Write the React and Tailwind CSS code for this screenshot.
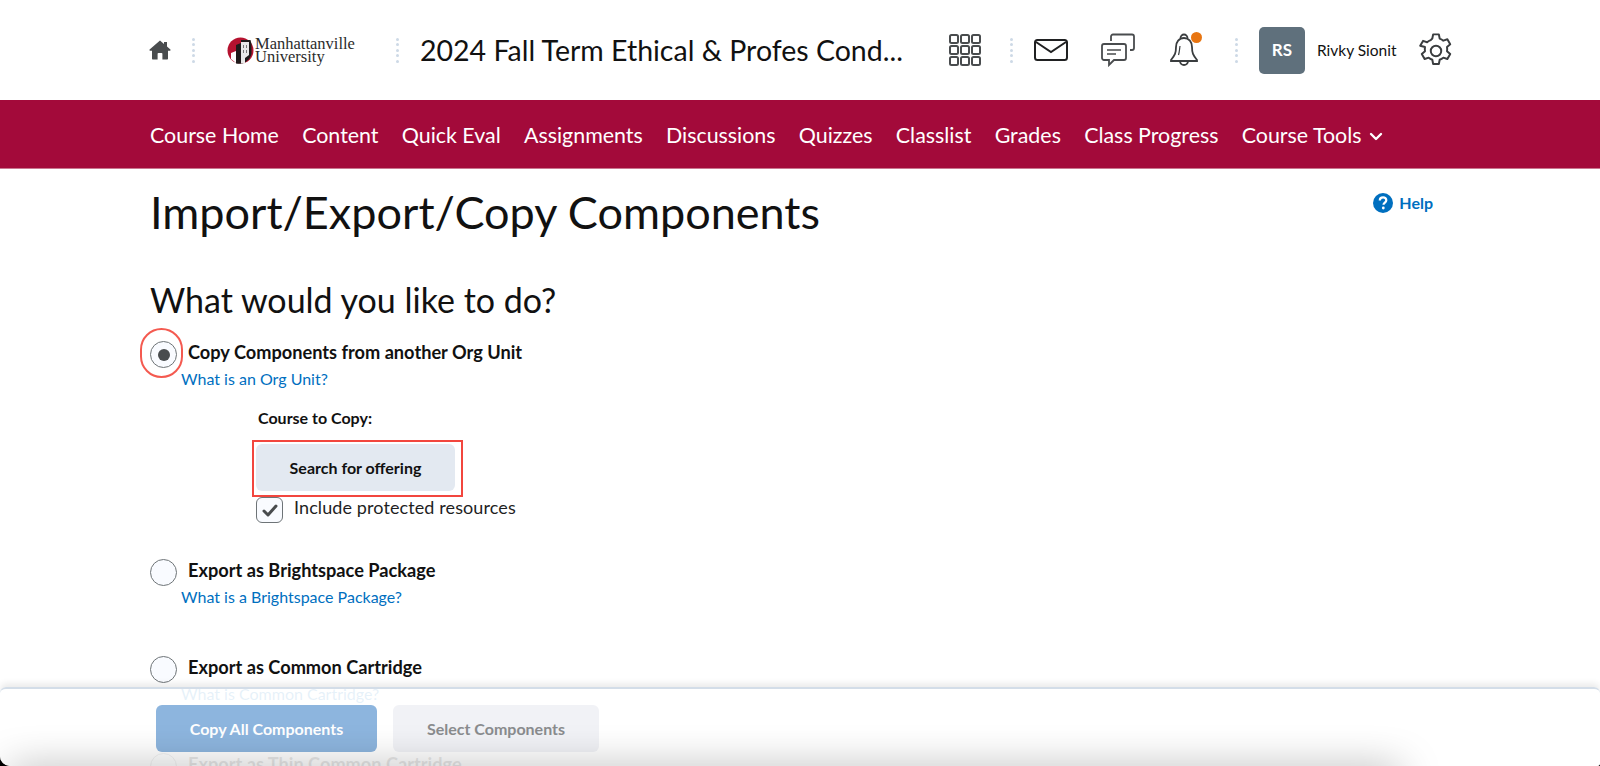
const navItems = [
  "Course Home",
  "Content",
  "Quick Eval",
  "Assignments",
  "Discussions",
  "Quizzes",
  "Classlist",
  "Grades",
  "Class Progress",
];

function Dots({ className }) {
  return (
    <div className={"flex flex-col gap-[2.500px] " + className}>
      {[0, 1, 2, 3, 4].map((i) => (
        <span key={i} className="w-[3px] h-[3px] rounded-full bg-[#cdd9e6]" />
      ))}
    </div>
  );
}

function Logo() {
  return (
    <div className="flex items-center w-[130px] h-[30px]">
      <svg width="27" height="27" viewBox="0 0 27 27" className="shrink-0">
        <circle cx="13.5" cy="13.5" r="13" fill="#b5122f" />
        <path d="M9 26.5V8l5-2V3h9.5l1 4v10a13 13 0 0 1-15.500 9.500z" fill="#1f1a1a" />
        <path d="M14 26.600V5h8v13l-4 3v5.600z" fill="#e8e8e8" />
        <path d="M4 22v-6l5-2v12z" fill="#fff" />
        <path d="M16 8h1v3h-1zM19 8h1v3h-1zM16 13h1v3h-1zM19 13h1v3h-1z" fill="#777" />
      </svg>
      <div className="ml-[1px] text-[16.500px] leading-[13px] text-[#2b2b2b] font-['Liberation_Serif',serif]">
        <div>Manhattanville</div>
        <div>University</div>
      </div>
    </div>
  );
}

function Radio({ checked }) {
  return (
    <span className="flex items-center justify-center w-[27px] h-[27px] rounded-full border border-[#6e7477] bg-[#f9fbff] shrink-0">
      {checked && <span className="w-[12px] h-[12px] rounded-full bg-[#494c4e]" />}
    </span>
  );
}

function Option({ label, link, checked }) {
  return (
    <div>
      <div className="flex items-center gap-[11px] h-[27px]">
        <Radio checked={checked} />
        <span className="mb-[3px] text-[18.200px] font-bold text-[#111]">{label}</span>
      </div>
      <a className="block ml-[31px] mt-[1px] text-[16px] leading-[20px] text-[#006fbf]">{link}</a>
    </div>
  );
}

export default function App() {
  return (
    <div className="h-[766px] w-[1600px] bg-black">
      <div className="relative h-[766px] w-[1600px] overflow-hidden rounded-bl-[10px] rounded-br-[3px] bg-white font-['Lato',sans-serif] text-[#111]">
        <header className="flex items-center h-[100px] pl-[149px]">
          <svg width="22" height="20" viewBox="0 0 22 20" className="text-[#494c4e] mt-[-1px]">
            <path
              fill="currentColor"
              d="M11 .5 .6 9.600c-.5.5-.2 1.200.5 1.200H3v7.600c0 .6.4 1 1 1h4.600v-5.600c0-.5.3-.8.8-.8h3.200c.5 0 .8.3.8.8v5.600H18c.6 0 1-.4 1-1v-7.600h1.900c.7 0 1-.7.5-1.200L18 6.600V2h-3v2L11 .5z"
            />
          </svg>
          <Dots className="ml-[21px]" />
          <div className="ml-[32px]">
            <Logo />
          </div>
          <Dots className="ml-[39px]" />
          <h1 className="ml-[21px] text-[28.500px] leading-[34px] w-[493px] whitespace-nowrap text-[#111]">
            2024 Fall Term Ethical &amp; Profes Cond...
          </h1>
          <svg width="32" height="32" viewBox="0 0 32 32" className="ml-[36px] text-[#494c4e]" fill="none" stroke="currentColor" strokeWidth="2">
            {[1, 12, 23].map((y) =>
              [1, 12, 23].map((x) => <rect key={x + "-" + y} x={x} y={y} width="8" height="8" rx="1.500" />)
            )}
          </svg>
          <Dots className="ml-[29px]" />
          <svg width="34" height="22" viewBox="0 0 34 22" className="ml-[21px] text-[#202122]" fill="none" stroke="currentColor" strokeWidth="2">
            <rect x="1" y="1" width="32" height="20" rx="2.500" />
            <path d="M2 3l15 10L32 3" />
          </svg>
          <svg width="34" height="34" viewBox="0 0 34 34" className="ml-[33px] text-[#494c4e]" fill="none" stroke="currentColor" strokeWidth="1.800">
            <path d="M10 8V3.500A2 2 0 0 1 12 1.500h19a2 2 0 0 1 2 2V15a2 2 0 0 1-2 2h-2" />
            <path d="M3 11h20a2 2 0 0 1 2 2v12a2 2 0 0 1-2 2H13l-5 5v-5H3a2 2 0 0 1-2-2V13a2 2 0 0 1 2-2z" />
            <path d="M6 17h14M6 21h9" strokeWidth="1.400" />
          </svg>
          <div className="relative ml-[35px] w-[34px] h-[34px]">
            <svg width="28" height="34" viewBox="0 0 28 34" className="absolute left-0 top-0 text-[#3a3d3f]" fill="none" stroke="currentColor" strokeWidth="1.800">
              <path d="M10.500 5a3.500 3.500 0 0 1 7 0" />
              <path d="M14 5c-5 0-8 4-8 9 0 6-1 8-5 13v1h26v-1c-4-5-5-7-5-13 0-5-3-9-8-9z" />
              <path d="M10 28a4 4 0 0 0 8 0" />
              <path d="M10 13c-.5 3-.5 6-1.500 9" strokeWidth="1.200" />
            </svg>
            <span className="absolute left-[21px] top-[-1px] w-[11px] h-[11px] rounded-full bg-[#e87511]" />
          </div>
          <Dots className="ml-[31px]" />
          <div className="ml-[21px] flex items-center justify-center w-[46px] h-[47px] rounded-[5px] bg-[#5f707c] text-white text-[17px] font-bold">
            RS
          </div>
          <span className="ml-[12px] mt-[1px] text-[15.500px] w-[100px] whitespace-nowrap">Rivky Sionit</span>
          <svg width="38" height="38" viewBox="0 0 24 24" className="mt-[2px] text-[#3a3d3f]" fill="none" stroke="currentColor" strokeWidth="1.250" strokeLinejoin="round">
            <path d="M9.670 4.140 10.200 1.500h3.600l.53 2.640a8 8 0 0 1 2.300 1.330l2.550-.86 1.800 3.120-2.020 1.780a8 8 0 0 1 0 2.660l2.020 1.780-1.800 3.120-2.550-.86a8 8 0 0 1-2.300 1.330l-.53 2.640h-3.600l-.53-2.640a8 8 0 0 1-2.300-1.330l-2.550.86-1.800-3.120 2.020-1.780a8 8 0 0 1 0-2.660L2.020 8.730l1.800-3.120 2.550.86a8 8 0 0 1 2.300-1.330z" />
            <circle cx="12" cy="12" r="3.300" />
          </svg>
        </header>

        <nav className="flex items-center h-[69px] pl-[150px] pt-[3px] gap-[23.250px] bg-[#a30a3a] border-b border-[#c9778f] text-white text-[21.400px]">
          {navItems.map((item) => (
            <a key={item} className="whitespace-nowrap">
              {item}
            </a>
          ))}
          <a className="flex items-center whitespace-nowrap">
            Course Tools
            <svg width="14" height="9" viewBox="0 0 14 9" className="ml-[7px] mt-[2px]" fill="none" stroke="currentColor" strokeWidth="2.400" strokeLinecap="round" strokeLinejoin="round">
              <path d="M2 2l5 5 5-5" />
            </svg>
          </a>
        </nav>

        <main className="pl-[150px] pr-[167px]">
          <div className="flex items-start justify-between pt-[14px]">
            <h2 className="text-[45px] leading-[58px]">Import/Export/Copy Components</h2>
            <a className="flex items-center gap-[6px] mt-[8px] text-[16px] font-bold text-[#006fbf]">
              <svg width="20" height="20" viewBox="0 0 20 20">
                <circle cx="10" cy="10" r="10" fill="currentColor" />
                <path d="M6.800 7.500c0-1.900 1.400-3.100 3.300-3.100s3.200 1.100 3.200 2.800c0 2.300-2.800 2.500-2.800 4.600" fill="none" stroke="#fff" strokeWidth="2.200" />
                <circle cx="10.300" cy="15" r="1.400" fill="#fff" />
              </svg>
              Help
            </a>
          </div>

          <h3 className="mt-[38px] text-[34px] leading-[42px]">What would you like to do?</h3>

          <div className="mt-[20px]">
            <Option label="Copy Components from another Org Unit" link="What is an Org Unit?" checked />

            <div className="ml-[106px] mt-[19px]">
              <div className="ml-[2px] text-[16px] font-bold leading-[20px]">Course to Copy:</div>
              <button className="mt-[16px] block w-[199px] h-[47px] rounded-[6px] bg-[#e3e9f1] text-[16px] font-bold text-[#111]">
                Search for offering
              </button>
              <label className="flex items-center gap-[11px] mt-[6px]">
                <span className="flex items-center justify-center w-[27px] h-[26px] rounded-[6px] border border-[#6e7477] bg-[#f9fbff]">
                  <svg width="16" height="13" viewBox="0 0 16 13" fill="none" stroke="#494c4e" strokeWidth="3" strokeLinecap="round" strokeLinejoin="round">
                    <path d="M2 7l4 4 8-9" />
                  </svg>
                </span>
                <span className="mb-[7px] text-[18px] leading-[16px] tracking-[0.1px] text-[#1f1f1f]">Include protected resources</span>
              </label>
            </div>

            <div className="mt-[36px]">
              <Option label="Export as Brightspace Package" link="What is a Brightspace Package?" />
            </div>
            <div className="mt-[49px]">
              <Option label="Export as Common Cartridge" link="What is Common Cartridge?" />
            </div>
            <div className="mt-[49px]">
              <Option label="Export as Thin Common Cartridge" link="What is Thin Common Cartridge?" />
            </div>
          </div>
        </main>

        {/* floating action bar over the list */}
        <div className="absolute left-0 right-0 bottom-0 h-[79px] rounded-tl-[6px] rounded-tr-[6px] border-t-2 border-[#d3dde8] bg-white/90 shadow-[0_-4px_6px_rgba(0,0,0,0.08)]">
          <div className="flex gap-[16px] pl-[156px] pt-[16px]">
            <button className="w-[221px] h-[47px] rounded-[6px] bg-[#8db5de] text-[16px] font-bold text-white">
              Copy All Components
            </button>
            <button className="w-[206px] h-[47px] rounded-[6px] bg-[#f1f2f6] text-[16px] font-bold text-[#8a8c8e]">
              Select Components
            </button>
          </div>
          {/* soft shadow rising from below the window edge */}
          <div className="absolute left-[10px] w-[1390px] bottom-[-24px] h-[20px] shadow-[0_0_40px_rgba(0,0,0,0.38)]" />
        </div>

        {/* annotations drawn on the screenshot */}
        <div className="absolute left-[140px] top-[328px] w-[43px] h-[50px] rounded-full border-2 border-[#f45a50]" />
        <div className="absolute left-[252px] top-[440px] w-[211px] h-[57px] border-2 border-[#f2463e]" />
      </div>
    </div>
  );
}
